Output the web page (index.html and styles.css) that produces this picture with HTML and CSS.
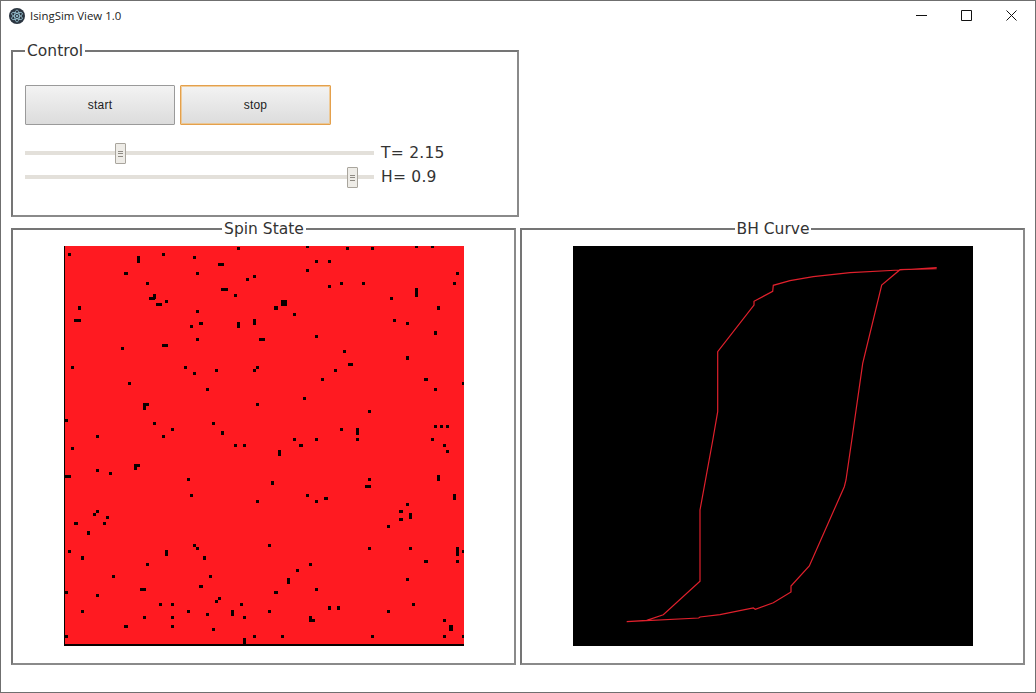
FILE: index.html
```html
<!DOCTYPE html>
<html lang="en">
<head>
<meta charset="utf-8">
<title>IsingSim View 1.0</title>
<link rel="stylesheet" href="styles.css">
</head>
<body>
<div class="window">
  <header class="titlebar">
    <svg class="app-icon" viewBox="0 0 16 16" width="16" height="16">
      <circle cx="8" cy="8" r="8" fill="#2b3540"/>
      <g fill="none" stroke="#a9d8e8" stroke-width="0.7">
        <ellipse cx="8" cy="8" rx="6" ry="2.4" transform="rotate(30 8 8)"/>
        <ellipse cx="8" cy="8" rx="6" ry="2.4" transform="rotate(90 8 8)"/>
        <ellipse cx="8" cy="8" rx="6" ry="2.4" transform="rotate(150 8 8)"/>
      </g>
      <circle cx="8" cy="8" r="1" fill="#a9d8e8"/>
    </svg>
    <span class="app-title">IsingSim View 1.0</span>
    <div class="win-controls">
      <svg class="win-btn" viewBox="0 0 11 11" width="11" height="11"><path d="M0 5.5h11" stroke="#111" fill="none"/></svg>
      <svg class="win-btn" viewBox="0 0 11 11" width="11" height="11"><path d="M.5 .5h10v10h-10z" stroke="#111" fill="none"/></svg>
      <svg class="win-btn" viewBox="0 0 11 11" width="11" height="11"><path d="M.5 .5l10 10M10.5 .5l-10 10" stroke="#111" fill="none"/></svg>
    </div>
  </header>

  <main class="content">
    <fieldset class="group control">
      <legend class="legend-left">Control</legend>
      <div class="buttons">
        <button class="btn" type="button">start</button>
        <button class="btn btn-focus" type="button">stop</button>
      </div>
      <div class="slider-row">
        <input class="slider" type="range" min="0" max="100" step="0.1" value="26.6" aria-label="T">
        <span class="slider-label">T= 2.15</span>
      </div>
      <div class="slider-row">
        <input class="slider" type="range" min="0" max="100" step="0.1" value="95.4" aria-label="H">
        <span class="slider-label">H= 0.9</span>
      </div>
    </fieldset>

    <div class="panels">
      <fieldset class="group panel">
        <legend class="legend-center">Spin State</legend>
        <svg class="plot spin" viewBox="64 246 400 400" width="400" height="400" shape-rendering="crispEdges">
          <rect x="64" y="246" width="400" height="400" fill="#ff1a21"/>
          <path fill="#0a0000" d="M64 246h1v400h-1zM64 644h400v2h-400z
M68 253h3v3h-3zM137 256h3v7h-3zM162 253h3v3h-3zM193 256h3v3h-3zM237 247h3v3h-3zM218 263h6v3h-6zM124 272h4v3h-4zM196 272h3v3h-3zM253 275h3v3h-3zM246 278h3v3h-3zM146 282h3v3h-3zM221 288h7v3h-7zM234 294h3v3h-3z
M153 294h3v5h-3zM149 297h6v3h-6zM156 303h6v3h-6zM165 300h3v3h-3zM78 306h3v4h-3zM196 310h3v3h-3zM74 319h7v3h-7zM237 322h3v6h-3zM253 319h3v6h-3zM199 322h4v3h-4zM190 325h3v3h-3zM196 338h3v3h-3zM259 338h6v3h-6zM121 347h3v3h-3zM162 344h6v3h-6zM71 366h3v3h-3zM184 366h3v3h-3zM193 372h3v3h-3zM215 369h3v3h-3zM253 369h3v3h-3zM256 366h3v3h-3z
M306 246h3v2h-3zM346 247h3v3h-3zM371 247h3v3h-3zM415 246h3v2h-3zM431 246h3v2h-3zM315 260h3v3h-3zM328 260h3v3h-3zM306 269h3v3h-3zM456 272h3v3h-3zM328 285h3v3h-3zM340 282h3v3h-3zM362 282h3v3h-3zM453 282h3v3h-3zM415 288h3v9h-3zM390 297h3v3h-3zM281 300h6v6h-6zM274 306h4v4h-4zM293 313h3v3h-3zM437 306h3v4h-3zM393 319h3v3h-3zM406 322h3v3h-3zM434 331h3v4h-3zM315 335h3v3h-3zM343 350h3v3h-3zM406 356h3v4h-3zM348 363h5v3h-5zM334 369h3v3h-3zM321 378h3v3h-3zM424 378h4v3h-4z
M128 382h3v3h-3zM206 388h3v3h-3zM256 403h3v3h-3zM143 403h6v3h-6zM143 406h3v4h-3zM64 419h4v3h-4zM153 422h3v3h-3zM212 422h3v3h-3zM171 428h3v3h-3zM221 431h3v4h-3zM96 435h3v3h-3zM162 435h3v3h-3zM234 444h3v3h-3zM243 444h3v3h-3zM71 447h3v3h-3zM134 464h6v3h-6zM134 467h3v3h-3zM96 469h3v3h-3zM109 472h3v3h-3zM64 475h7v3h-7zM187 478h3v3h-3zM190 494h3v3h-3zM256 500h3v3h-3zM96 510h3v3h-3zM93 513h3v3h-3zM106 516h3v3h-3z
M434 388h3v3h-3zM462 382h2v3h-2zM303 397h3v3h-3zM368 410h3v3h-3zM434 425h3v3h-3zM440 425h3v3h-3zM446 425h3v3h-3zM340 428h3v3h-3zM356 428h3v7h-3zM293 438h3v3h-3zM315 438h3v3h-3zM356 438h3v3h-3zM431 438h3v3h-3zM299 444h4v3h-4zM443 444h3v3h-3zM446 450h3v3h-3zM278 450h3v6h-3zM271 481h3v4h-3zM368 478h3v3h-3zM365 485h6v3h-6zM437 475h3v6h-3zM453 494h3v6h-3zM306 494h3v3h-3zM315 500h3v3h-3zM324 497h4v3h-4zM406 503h3v3h-3zM399 510h4v3h-4zM409 513h3v6h-3zM399 518h4v3h-4z
M74 522h4v3h-4zM103 522h3v3h-3zM87 531h3v4h-3zM193 544h3v3h-3zM196 547h3v3h-3zM165 550h3v6h-3zM68 550h3v3h-3zM81 556h3v4h-3zM203 556h3v4h-3zM268 544h3v3h-3zM146 563h3v3h-3zM112 575h3v3h-3zM209 575h3v3h-3zM140 588h6v3h-6zM199 585h4v3h-4zM64 591h4v3h-4zM96 594h3v3h-3zM218 597h3v3h-3zM215 600h3v3h-3zM159 603h3v3h-3zM171 603h3v3h-3zM240 603h3v3h-3zM81 610h3v3h-3zM187 610h3v3h-3zM231 610h3v6h-3zM268 610h3v3h-3zM171 616h3v3h-3zM143 616h3v3h-3zM206 613h3v3h-3zM243 616h3v3h-3zM124 625h4v3h-4zM171 625h3v3h-3zM212 628h3v3h-3zM64 635h4v3h-4zM253 635h3v3h-3zM243 638h3v6h-3z
M387 525h3v3h-3zM368 547h3v3h-3zM409 547h3v3h-3zM456 547h3v9h-3zM462 550h2v3h-2zM309 563h3v3h-3zM296 569h3v3h-3zM424 560h4v3h-4zM456 560h3v3h-3zM287 578h3v6h-3zM406 578h3v3h-3zM274 591h4v3h-4zM315 588h3v3h-3zM328 606h3v4h-3zM337 606h3v4h-3zM412 603h3v3h-3zM387 610h3v3h-3zM309 616h3v6h-3zM309 619h6v3h-6zM443 619h3v3h-3zM449 625h4v6h-4zM281 635h3v3h-3zM371 635h3v3h-3zM443 635h3v3h-3zM462 635h2v3h-2z"/>
        </svg>
      </fieldset>
      <fieldset class="group panel">
        <legend class="legend-center">BH Curve</legend>
        <svg class="plot bh" viewBox="573 246 400 400" width="400" height="400">
          <rect x="573" y="246" width="400" height="400" fill="#000"/>
          <polyline fill="none" stroke="#e0202c" stroke-width="1.2" points="936.7,268.7 900,269.7 881.7,285 862.7,363.3 851.8,440 846,480 844.3,486.7 809.3,566 791,586 791,592 773.3,602.7 755.3,609.3 753.3,608 720,614.7 700,617 698.7,618 626.7,621.7 646.7,620.3 663.3,614.7 700,581.3 700,510 712.8,440 717.7,411.7 717.7,351.7 754,305 754,301.3 772.7,291.3 773.3,285.3 790,280.7 813.3,276.7 850,272.7 900,270 936.7,267.7"/>
        </svg>
      </fieldset>
    </div>
  </main>
</div>
</body>
</html>
```
FILE: styles.css
```css
* { box-sizing: border-box; }
html, body { margin: 0; height: 100%; background: #fff; overflow: hidden; }
.window {
  width: 1036px;
  height: 693px;
  border: 1px solid #6f6f6f;
  display: flex;
  flex-direction: column;
  font-family: "DejaVu Sans", "Noto Sans", sans-serif;
  color: #333;
}
.titlebar {
  height: 30px;
  flex: none;
  display: flex;
  align-items: center;
  padding-left: 8px;
}
.app-icon { flex: none; }
.app-title {
  margin: 0 0 2px 5px;
  font-family: "Open Sans", "Noto Sans", sans-serif;
  font-size: 11.4px;
  color: #222;
}
.win-controls {
  margin-left: auto;
  margin-bottom: 2px;
  display: flex;
  gap: 34px;
  padding-right: 18px;
}
.win-btn { display: block; }

.content {
  flex: 1;
  display: flex;
  flex-direction: column;
  padding: 10px 10px 0;
  gap: 2px;
}
.group {
  margin: 0;
  border: 2px solid #808080;
  border-color: #757575 #8a8a8a #8a8a8a #757575;
  min-width: 0;
}
legend {
  font-size: 15.5px;
  line-height: 20px;
  color: #333;
}
.legend-left { padding: 0 2px; margin-left: 0; }
.legend-center { padding: 0 2px; margin: 0 auto; }

.control {
  width: 508px;
  height: 176px;
  padding: 24px 12px 0;
  flex: none;
}
.buttons { display: flex; gap: 5px; margin-bottom: 16px; }
.btn {
  width: 150px;
  height: 40px;
  border: 1px solid #9a9a9a;
  border-radius: 1px;
  background: linear-gradient(#f3f3f3, #dcdcdc);
  font-family: "Liberation Sans", Arial, sans-serif;
  font-size: 12px;
  letter-spacing: 0.2px;
  color: #222;
  padding: 0;
}
.btn-focus {
  width: 151px;
  border: 1px solid #e4a04c;
  box-shadow: inset 0 0 0 1px rgba(240, 190, 120, 0.7);
}
.slider-row {
  display: flex;
  align-items: center;
  height: 24px;
  gap: 7px;
}
.slider {
  -webkit-appearance: none;
  appearance: none;
  width: 349px;
  height: 22px;
  margin: 0;
  background: transparent;
}
.slider::-webkit-slider-runnable-track {
  height: 4px;
  background: #e3e0da;
}
.slider::-webkit-slider-thumb {
  -webkit-appearance: none;
  width: 11px;
  height: 21px;
  margin-top: -8.5px;
  border: 1px solid #a9a59d;
  border-radius: 1px;
  background:
    linear-gradient(#8f8b84, #8f8b84) center 7px / 5px 1px no-repeat,
    linear-gradient(#8f8b84, #8f8b84) center 9.5px / 5px 1px no-repeat,
    linear-gradient(#8f8b84, #8f8b84) center 12px / 5px 1px no-repeat,
    #eeece7;
}
.slider-label {
  font-size: 15.5px;
  letter-spacing: 0.25px;
  margin-bottom: 1px;
  white-space: nowrap;
}

.panels {
  display: flex;
  gap: 4px;
}
.panel {
  width: 505px;
  height: 446px;
  padding: 7px 0 0 1px;
  display: flex;
  justify-content: center;
}
.plot { display: block; }
```
